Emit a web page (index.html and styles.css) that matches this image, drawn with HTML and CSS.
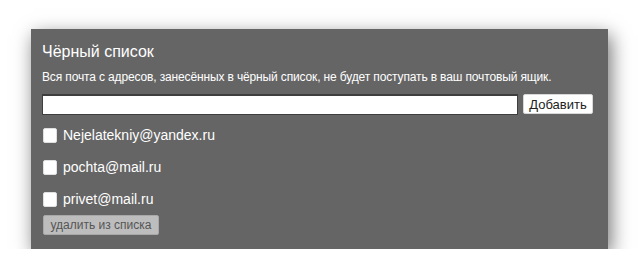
FILE: index.html
```html
<!DOCTYPE html>
<html lang="ru">
<head>
<meta charset="utf-8">
<title>Чёрный список</title>
<link rel="stylesheet" href="styles.css">
</head>
<body>
<div class="panel">
  <h2 class="title">Чёрный список</h2>
  <p class="desc">Вся почта с адресов, занесённых в чёрный список, не будет поступать в ваш почтовый ящик.</p>
  <div class="add-row">
    <input class="addr-input" type="text">
    <button class="add-btn" type="button">Добавить</button>
  </div>
  <ul class="list">
    <li class="item"><input class="check" type="checkbox"><span class="email">Nejelatekniy@yandex.ru</span></li>
    <li class="item"><input class="check" type="checkbox"><span class="email">pochta@mail.ru</span></li>
    <li class="item"><input class="check" type="checkbox"><span class="email">privet@mail.ru</span></li>
  </ul>
  <button class="del-btn" type="button">удалить из списка</button>
</div>
</body>
</html>
```
FILE: styles.css
```css
html, body {
  margin: 0;
  padding: 0;
  background: #ffffff;
}
body {
  font-family: "Liberation Sans", Arial, sans-serif;
  padding: 29px 0 0 31px;
}
.panel {
  box-sizing: border-box;
  width: 577px;
  height: 220px;
  background: #656565;
  padding: 13px 11px 0 11px;
  box-shadow: 3px 6px 18px rgba(0, 0, 0, 0.55);
  color: #ffffff;
}
.title {
  margin: 0;
  font-size: 16px;
  line-height: 20px;
  font-weight: normal;
}
.desc {
  margin: 7px 0 0 0;
  font-size: 12px;
  line-height: 16px;
  letter-spacing: -0.14px;
}
.add-row {
  display: flex;
  gap: 5px;
  margin-top: 9px;
  align-items: flex-start;
}
.addr-input {
  box-sizing: border-box;
  width: 476px;
  height: 21px;
  margin: 0;
  border: 1px solid #3e3e3e;
  border-top-width: 2px;
  background: #ffffff;
  padding: 0 4px;
}
.add-btn {
  box-sizing: border-box;
  width: 70px;
  height: 20px;
  margin: 0;
  padding: 0;
  background: #ffffff;
  border: 1px solid #d8d8d8;
  border-radius: 2px;
  font-family: inherit;
  font-size: 13px;
  color: #222222;
}
.list {
  list-style: none;
  margin: 4px 0 0 0;
  padding: 0;
}
.item {
  display: flex;
  align-items: center;
  height: 32px;
}
.check {
  appearance: none;
  -webkit-appearance: none;
  box-sizing: border-box;
  width: 14px;
  height: 15px;
  margin: 0 6px 0 1px;
  background: #ffffff;
  border: 1px solid #e0e0e0;
  border-radius: 2px;
}
.email {
  font-size: 14px;
  line-height: 16px;
}
.del-btn {
  box-sizing: border-box;
  width: 116px;
  height: 20px;
  margin: 0 0 0 1px;
  padding: 0;
  background: #bdbdbd;
  border: 1px solid #a8a8a8;
  border-radius: 2px;
  font-family: inherit;
  font-size: 12px;
  color: #555555;
}
```
